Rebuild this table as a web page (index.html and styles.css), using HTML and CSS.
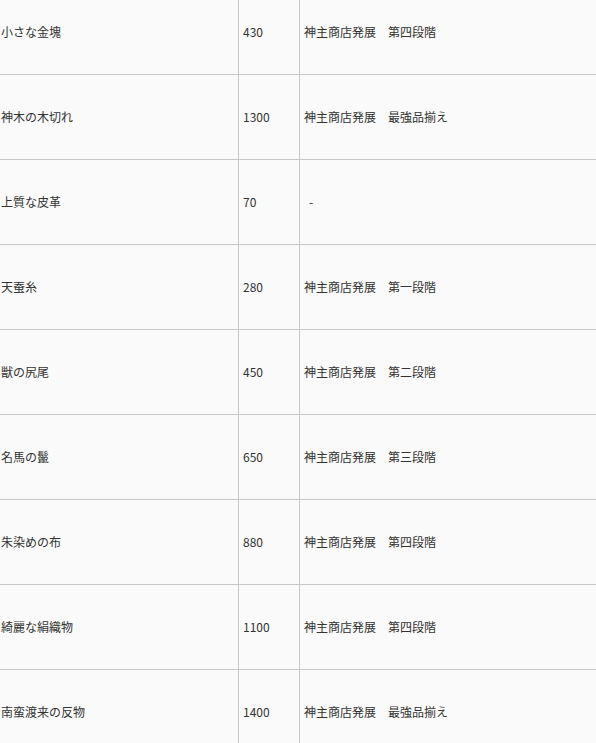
FILE: index.html
```html
<!DOCTYPE html>
<html lang="ja">
<head>
<meta charset="utf-8">
<link rel="stylesheet" href="styles.css">
</head>
<body>
<div class="table">
  <div class="row"><div class="cell c1">小さな金塊</div><div class="cell c2">430</div><div class="cell c3">神主商店発展　第四段階</div></div>
  <div class="row"><div class="cell c1">神木の木切れ</div><div class="cell c2">1300</div><div class="cell c3">神主商店発展　最強品揃え</div></div>
  <div class="row"><div class="cell c1">上質な皮革</div><div class="cell c2">70</div><div class="cell c3 dash">-</div></div>
  <div class="row"><div class="cell c1">天蚕糸</div><div class="cell c2">280</div><div class="cell c3">神主商店発展　第一段階</div></div>
  <div class="row"><div class="cell c1">獣の尻尾</div><div class="cell c2">450</div><div class="cell c3">神主商店発展　第二段階</div></div>
  <div class="row"><div class="cell c1">名馬の鬣</div><div class="cell c2">650</div><div class="cell c3">神主商店発展　第三段階</div></div>
  <div class="row"><div class="cell c1">朱染めの布</div><div class="cell c2">880</div><div class="cell c3">神主商店発展　第四段階</div></div>
  <div class="row"><div class="cell c1">綺麗な絹織物</div><div class="cell c2">1100</div><div class="cell c3">神主商店発展　第四段階</div></div>
  <div class="row"><div class="cell c1">南蛮渡来の反物</div><div class="cell c2">1400</div><div class="cell c3">神主商店発展　最強品揃え</div></div>
</div>
</body>
</html>
```
FILE: styles.css
```css
html, body {
  margin: 0;
  padding: 0;
  background: #fafafa;
}
body {
  font-family: "Noto Sans CJK JP", "Noto Sans", sans-serif;
  font-size: 12px;
  color: #333;
  overflow: hidden;
}
.table {
  margin-top: -10px;
}
.row {
  display: grid;
  grid-template-columns: 238px 61px 1fr;
  height: 85px;
  box-sizing: border-box;
  border-bottom: 1px solid #c8c8c8;
}
.cell {
  display: flex;
  align-items: center;
  white-space: nowrap;
  padding-bottom: 2px;
}
.c1 {
  padding-left: 1px;
}
.c2, .c3 {
  border-left: 1px solid #c8c8c8;
  padding-left: 4px;
}
.dash {
  padding-left: 9px;
}
```
